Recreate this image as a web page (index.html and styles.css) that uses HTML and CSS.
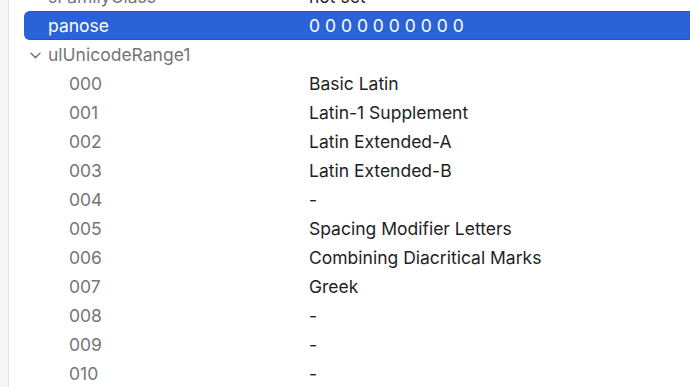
FILE: index.html
```html
<!DOCTYPE html>
<html lang="en">
<head>
    <meta charset="UTF-8">
    <title>Font Info - OS/2</title>
    <link rel="stylesheet" href="styles.css">
</head>
<body>

<div class="gutter"></div>

<div class="table">
    <div class="row">
        <span class="key">sFamilyClass</span>
        <span class="value">not set</span>
    </div>
    <div class="row selected">
        <span class="key">panose</span>
        <span class="value">0 0 0 0 0 0 0 0 0 0</span>
    </div>
    <div class="row">
        <span class="key">
            <svg class="chevron" width="11" height="7" viewBox="0 0 11 7"><path d="M1 1.2 L5.5 5.6 L10 1.2" fill="none" stroke="#7b7b7b" stroke-width="1.5" stroke-linecap="round" stroke-linejoin="round"/></svg>
            ulUnicodeRange1
        </span>
        <span class="value"></span>
    </div>
    <div class="row child"><span class="key">000</span><span class="value">Basic Latin</span></div>
    <div class="row child"><span class="key">001</span><span class="value">Latin-1 Supplement</span></div>
    <div class="row child"><span class="key">002</span><span class="value">Latin Extended-A</span></div>
    <div class="row child"><span class="key">003</span><span class="value">Latin Extended-B</span></div>
    <div class="row child"><span class="key">004</span><span class="value">-</span></div>
    <div class="row child"><span class="key">005</span><span class="value">Spacing Modifier Letters</span></div>
    <div class="row child"><span class="key">006</span><span class="value">Combining Diacritical Marks</span></div>
    <div class="row child"><span class="key">007</span><span class="value">Greek</span></div>
    <div class="row child"><span class="key">008</span><span class="value">-</span></div>
    <div class="row child"><span class="key">009</span><span class="value">-</span></div>
    <div class="row child"><span class="key">010</span><span class="value">-</span></div>
</div>

</body>
</html>
```

FILE: styles.css
```css
body {
    margin: 0;
    padding: 0;
    background-color: #ffffff;
    color: #1e1e1e;
    font-family: Inter, "Noto Sans", sans-serif;
    font-size: 17.5px;
    display: flex;
    height: 387px;
    overflow: hidden;
}
.gutter {
    width: 8px;
    flex-shrink: 0;
    background-color: #f6f6f6;
    border-right: 1px solid #e2e2e2; /* sidebar edge */
}
.table {
    flex: 1;
    margin-top: -18px; /* first row is scrolled half out of view */
    margin-left: 15px;
    margin-right: -20px;
}
.row {
    display: grid;
    grid-template-columns: 285px 1fr;
    align-items: center;
    height: 29px;
    box-sizing: border-box;
}
.key {
    color: #757575;
    padding-left: 24px;
    position: relative;
}
.child .key {
    padding-left: 45px;
}
.chevron {
    position: absolute;
    left: 6px;
    top: 8px;
}
.row.selected {
    background-color: #2a63d8;
    border-top: 1px solid #1b56d4;
    border-bottom: 1px solid #1b56d4;
    border-radius: 6px 0 0 6px;
}
.row.selected .key,
.row.selected .value {
    color: #ffffff;
}
.value {
    white-space: nowrap;
}
```
